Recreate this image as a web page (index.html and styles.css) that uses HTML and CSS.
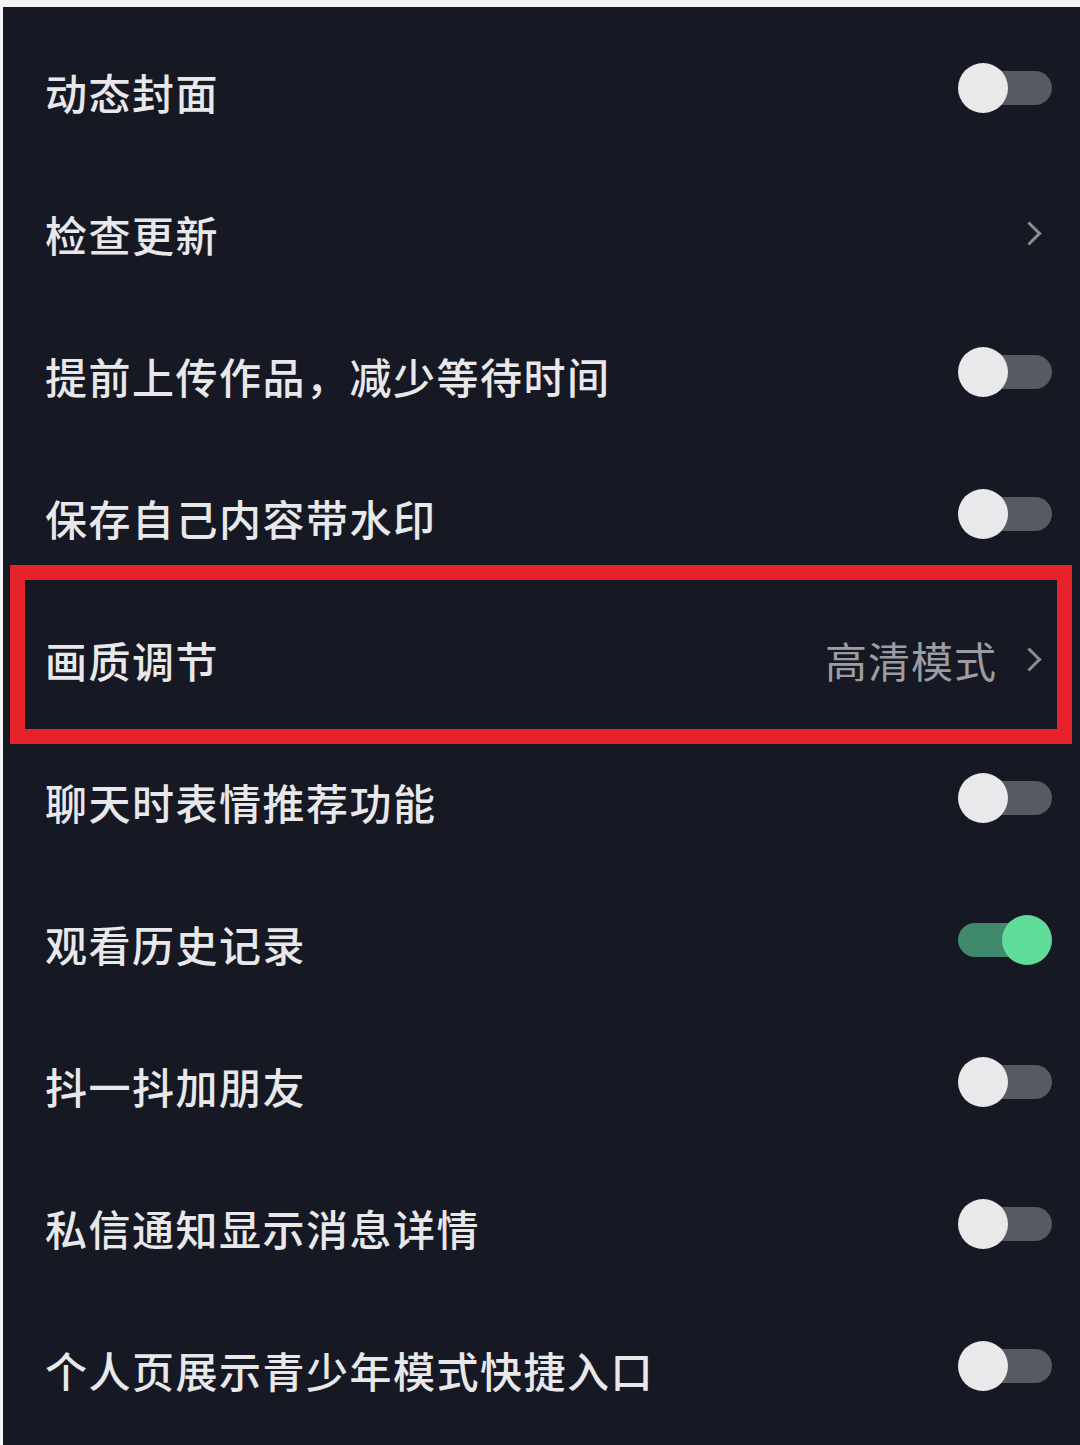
FILE: index.html
```html
<!DOCTYPE html>
<html lang="zh-CN">
<head>
    <meta charset="UTF-8">
    <meta name="viewport" content="width=device-width, initial-scale=1.0">
    <title>设置</title>
    <link rel="stylesheet" href="styles.css">
</head>
<body>
    <div class="screen">
        <div class="row">
            <span class="label">动态封面</span>
            <span class="switch"></span>
        </div>
        <div class="row">
            <span class="label">检查更新</span>
            <span class="chevron"></span>
        </div>
        <div class="row">
            <span class="label">提前上传作品，减少等待时间</span>
            <span class="switch"></span>
        </div>
        <div class="row">
            <span class="label">保存自己内容带水印</span>
            <span class="switch"></span>
        </div>
        <div class="row highlighted">
            <span class="label">画质调节</span>
            <span class="value">高清模式</span>
            <span class="chevron"></span>
            <span class="mark"></span>
        </div>
        <div class="row">
            <span class="label">聊天时表情推荐功能</span>
            <span class="switch"></span>
        </div>
        <div class="row">
            <span class="label">观看历史记录</span>
            <span class="switch on"></span>
        </div>
        <div class="row">
            <span class="label">抖一抖加朋友</span>
            <span class="switch"></span>
        </div>
        <div class="row">
            <span class="label">私信通知显示消息详情</span>
            <span class="switch"></span>
        </div>
        <div class="row">
            <span class="label">个人页展示青少年模式快捷入口</span>
            <span class="switch"></span>
        </div>
    </div>
</body>
</html>
```

FILE: styles.css
```css
body { margin: 0; background-color: #f4f4f6; font-family: "Noto Sans CJK SC", "Noto Sans", sans-serif; }
.screen { margin: 7px 0 0 3px; padding-top: 13px; background-color: #161823; min-height: 1438px; box-sizing: border-box; }

.row { position: relative; display: flex; align-items: center; height: 142px; padding: 0 28px 0 42px; }
.label { flex: 1; font-size: 42px; font-weight: 500; color: #e8e8ea; letter-spacing: 1.5px; }
.value { font-size: 42px; color: #9c9da3; letter-spacing: 1px; margin-right: 24px; }

.chevron { width: 14px; height: 14px; border-top: 3px solid #8c8d93; border-right: 3px solid #8c8d93; transform: rotate(45deg); margin-right: 14px; }

.switch { position: relative; width: 94px; height: 52px; margin-bottom: 6px; }
.switch::before { content: ""; position: absolute; left: 4px; right: 0; top: 9px; height: 34px; border-radius: 17px; background-color: #585a63; }
.switch::after { content: ""; position: absolute; left: 0; top: 1px; width: 50px; height: 50px; border-radius: 50%; background-color: #e9e9ec; }
.switch.on::before { background-color: #3f8a6c; right: 12px; left: 0; }
.switch.on::after { left: auto; right: 0; background-color: #5fdc9a; }

.mark { position: absolute; left: 7px; right: 8px; top: -23px; bottom: -14px; border: 15px solid #e6222a; }
```
